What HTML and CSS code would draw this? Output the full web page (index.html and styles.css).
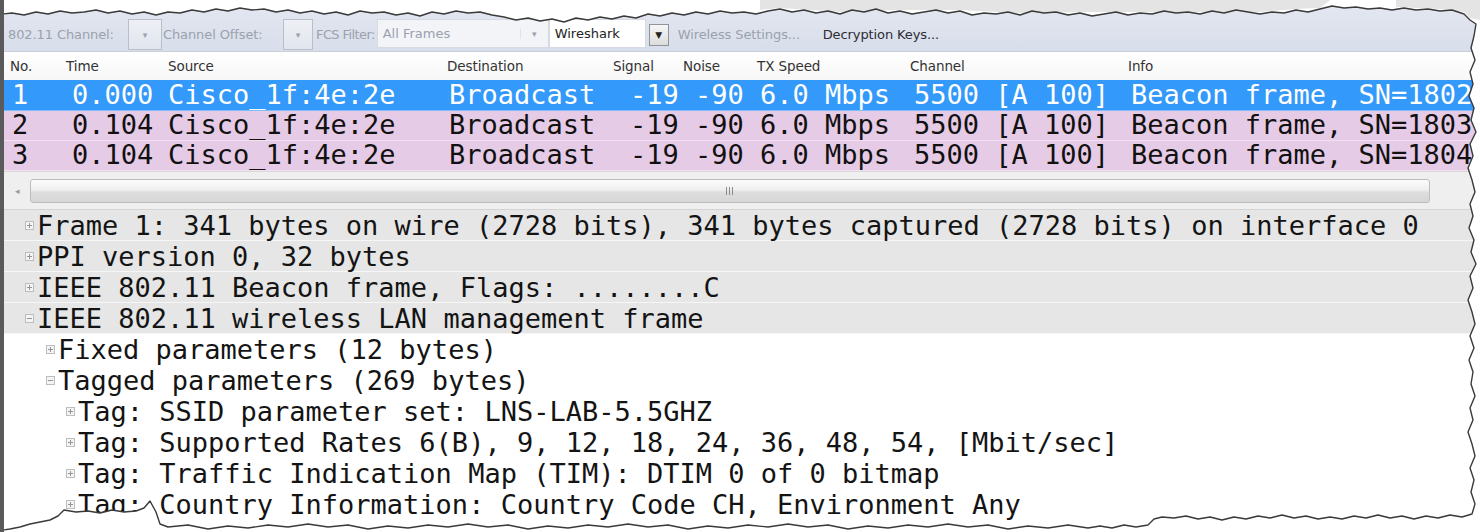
FILE: index.html
```html
<!DOCTYPE html>
<html lang="en">
<head>
<meta charset="utf-8">
<title>Wireshark - 802.11 capture</title>
<link rel="stylesheet" href="styles.css">
</head>
<body>
<div class="sheet">
  <div class="toolbar">
    <span class="tb-label dim w-chan">802.11 Channel:</span>
    <span class="combo mini"><span class="arr dim">&#9662;</span></span>
    <span class="tb-label dim w-off">Channel Offset:</span>
    <span class="combo mini2"><span class="arr dim">&#9662;</span></span>
    <span class="tb-label dim w-fcs">FCS Filter:</span>
    <span class="field fcs"><span class="field-text dim">All Frames</span><span class="arr dim">&#9662;</span></span>
    <span class="field iface"><span class="field-text">Wireshark</span></span>
    <span class="dropbtn">&#9660;</span>
    <span class="tb-label dim w-wifi">Wireless Settings...</span>
    <span class="tb-label strong">Decryption Keys...</span>
  </div>

  <div class="plist">
    <div class="pgrid phead">
      <span class="h-no">No.</span>
      <span>Time</span>
      <span>Source</span>
      <span>Destination</span>
      <span>Signal</span>
      <span>Noise</span>
      <span>TX Speed</span>
      <span>Channel</span>
      <span>Info</span>
    </div>
    <div class="pgrid prow sel">
      <span class="d-no">1</span>
      <span class="d-time">0.000</span>
      <span class="d-src">Cisco_1f:4e:2e</span>
      <span class="d-dst">Broadcast</span>
      <span class="d-sig">-19</span>
      <span class="d-noise">-90</span>
      <span class="d-tx">6.0 Mbps</span>
      <span class="d-chan">5500 [A 100]</span>
      <span class="d-info">Beacon frame, SN=1802</span>
    </div>
    <div class="pgrid prow">
      <span class="d-no">2</span>
      <span class="d-time">0.104</span>
      <span class="d-src">Cisco_1f:4e:2e</span>
      <span class="d-dst">Broadcast</span>
      <span class="d-sig">-19</span>
      <span class="d-noise">-90</span>
      <span class="d-tx">6.0 Mbps</span>
      <span class="d-chan">5500 [A 100]</span>
      <span class="d-info">Beacon frame, SN=1803</span>
    </div>
    <div class="pgrid prow">
      <span class="d-no">3</span>
      <span class="d-time">0.104</span>
      <span class="d-src">Cisco_1f:4e:2e</span>
      <span class="d-dst">Broadcast</span>
      <span class="d-sig">-19</span>
      <span class="d-noise">-90</span>
      <span class="d-tx">6.0 Mbps</span>
      <span class="d-chan">5500 [A 100]</span>
      <span class="d-info">Beacon frame, SN=1804</span>
    </div>
  </div>

  <div class="hscroll">
    <span class="sc-left">&#9666;</span>
    <span class="sc-thumb"><span class="grip"></span></span>
    <span class="sc-rest"></span>
  </div>

  <div class="tree">
    <div class="node shaded lv0"><span class="exp plus"></span>Frame 1: 341 bytes on wire (2728 bits), 341 bytes captured (2728 bits) on interface 0</div>
    <div class="node shaded lv0"><span class="exp plus"></span>PPI version 0, 32 bytes</div>
    <div class="node shaded lv0"><span class="exp plus"></span>IEEE 802.11 Beacon frame, Flags: ........C</div>
    <div class="node shaded lv0"><span class="exp minus"></span>IEEE 802.11 wireless LAN management frame</div>
    <div class="node lv1"><span class="exp plus"></span>Fixed parameters (12 bytes)</div>
    <div class="node lv1"><span class="exp minus"></span>Tagged parameters (269 bytes)</div>
    <div class="node lv2"><span class="exp plus"></span>Tag: SSID parameter set: LNS-LAB-5.5GHZ</div>
    <div class="node lv2"><span class="exp plus"></span>Tag: Supported Rates 6(B), 9, 12, 18, 24, 36, 48, 54, [Mbit/sec]</div>
    <div class="node lv2"><span class="exp plus"></span>Tag: Traffic Indication Map (TIM): DTIM 0 of 0 bitmap</div>
    <div class="node lv2"><span class="exp plus"></span>Tag: Country Information: Country Code CH, Environment Any</div>
  </div>

  <!-- torn paper outline laid over the window -->
  <svg class="edges" width="1480" height="532" viewBox="0 0 1480 532" aria-hidden="true">
    <defs>
      <path id="torn" d="M3,14 L12,13 24,15 36,12 48,14 60,11 72,13 84,12 96,10 108,13 120,11 132,14 144,12 156,15 168,12 180,13 192,10 204,12 216,9 228,11 240,8 252,10 264,9 276,12 288,10 300,13 312,11 324,14 336,12 348,15 360,11 372,13 384,12 396,15 408,13 420,16 432,12 444,14 456,11 468,13 480,12 492,15 504,17 516,20 528,18 540,21 552,19 564,22 576,18 588,20 600,17 612,19 624,16 636,18 648,14 660,16 672,13 684,15 696,12 708,14 720,11 732,13 744,12 756,14 768,11 780,9 792,12 804,10 816,13 828,11 840,14 852,10 864,12 876,9 888,13 900,11 912,14 924,12 936,10 948,13 960,11 972,15 984,13 996,14 1008,12 1020,15 1032,11 1044,13 1056,12 1068,15 1080,13 1092,16 1104,14 1116,12 1128,15 1140,13 1152,14 1164,11 1176,13 1188,12 1200,14 1212,11 1224,13 1236,10 1248,12 1260,14 1272,12 1284,13 1296,10 1308,12 1320,9 1332,6 1344,8 1356,7 1368,9 1380,8 1392,10 1404,8 1416,10 1428,9 1440,11 1452,10 1464,14 1470,20 1476,24
        L1474,36 1471,48 1475,60 1470,72 1473,84 1469,96 1474,108 1471,120 1476,132 1470,144 1473,156 1468,168 1472,180 1475,192 1470,204 1473,216 1469,228 1474,240 1471,252 1476,264 1470,276 1473,288 1468,300 1472,312 1475,324 1470,336 1474,348 1469,360 1473,372 1471,384 1475,396 1470,408 1473,420 1468,432 1472,444 1475,456 1470,468 1474,480 1471,492 1475,504 1472,514
        L1462,517 1450,515 1438,518 1426,516 1414,519 1402,516 1390,518 1378,515 1366,518 1354,516 1342,519 1330,517 1318,519 1306,516 1294,518 1282,515 1270,518 1258,516 1246,519 1234,517 1222,520 1210,517 1198,519 1186,516 1174,518 1162,517 1154,519 1148,525 1136,527 1124,525 1112,528 1100,526 1088,528 1068,525 1048,528 1028,526 1008,529 988,525 968,527 948,524 928,527 908,525 888,528 868,526 848,529 828,525 808,527 788,524 768,527 748,525 728,528 708,526 688,529 668,525 648,527 628,524 608,527 588,525 568,528 548,526 528,529 508,525 488,527 468,524 448,527 428,525 408,528 388,526 368,529 348,525 328,527 308,524 288,527 268,525 248,528 228,526 208,529 188,525 168,527 160,524 156,512 150,501 144,508 136,511 124,512 112,510 100,513 88,511 76,512 64,510 58,516 50,520 40,522 30,524 20,527 10,529 3,530 Z"/>
      <mask id="paper">
        <rect width="1480" height="532" fill="#fff"/>
        <use href="#torn" fill="#000"/>
      </mask>
    </defs>
    <rect class="outside" width="1480" height="532" mask="url(#paper)"/>
    <path class="shade" d="M760,0 H1330 L1320,8 1296,9 1260,12 1200,12 1140,12 1080,12 1020,13 960,10 900,10 840,12 780,8 760,10 Z M1396,0 H1480 V20 L1470,18 1464,12 1440,9 1416,8 1396,7 Z"/>
    <use href="#torn" class="outline"/>
  </svg>
</div>
</body>
</html>
```

FILE: styles.css
```css
* {
  box-sizing: border-box;
}

html, body {
  margin: 0;
  padding: 0;
  background: #ffffff;
}

.sheet {
  position: relative;
  width: 1480px;
  height: 532px;
  overflow: hidden;
  border-left: 4px solid #5a5a5a;
  background: #ffffff;
}

/* ---------- wireless toolbar ---------- */
.toolbar {
  height: 52px;
  padding: 18px 0 0 4px;
  display: flex;
  align-items: stretch;
  background: linear-gradient(#e4e8f2, #d8deea);
  border-bottom: 1px solid #c9cfdb;
  font-family: "DejaVu Sans", "Liberation Sans", sans-serif;
  font-size: 13px;
  color: #2b2b2b;
}

.tb-label {
  display: flex;
  align-items: center;
  white-space: nowrap;
  letter-spacing: -0.1px;
}

.dim {
  color: #9aa1ad;
}

.strong {
  color: #2c2c34;
}

.w-chan { width: 120px; }
.w-off  { width: 120px; margin-left: 1px; }
.w-fcs  { margin: 0 2px 0 3px; letter-spacing: -0.6px; }
.w-wifi { width: 145px; margin-left: 9px; }

.combo {
  display: flex;
  align-items: center;
  justify-content: center;
  margin: 1px 0 1px 0;
  border: 1px solid #b9bec8;
  background: linear-gradient(#eef0f5, #e1e5ee);
}

.mini  { width: 34px; }
.mini2 { width: 30px; }

.arr {
  font-size: 9px;
}

.field {
  display: flex;
  align-items: center;
  margin: 1px 0 3px 0;
  background: #ffffff;
  border: 1px solid #d6dae2;
}

.field-text {
  padding-left: 5px;
  flex: 1;
}

.fcs {
  width: 172px;
  background: #f3f4f7;
}

.fcs .arr {
  width: 28px;
  text-align: center;
  border-left: 1px solid #e0e3ea;
}

.iface {
  width: 97px;
  color: #222;
}

.dropbtn {
  display: flex;
  align-items: center;
  justify-content: center;
  width: 20px;
  margin: 6px 0 5px 3px;
  border: 1px solid #8f949c;
  background: linear-gradient(#f7f7f7, #dcdcdc);
  font-size: 9px;
  color: #222;
}

/* ---------- packet list ---------- */
.plist {
  font-family: "DejaVu Sans Mono", "Liberation Mono", monospace;
}

.pgrid {
  display: grid;
  grid-template-columns: 58px 102px 279px 166px 70px 74px 153px 218px minmax(0, 1fr);
  white-space: nowrap;
}

.phead {
  height: 28px;
  padding-top: 6px;
  background: linear-gradient(#ffffff, #f7f7f7);
  font-family: "DejaVu Sans", "Liberation Sans", sans-serif;
  font-size: 13.5px;
  color: #333;
  letter-spacing: -0.1px;
}

.phead span {
  padding-left: 4px;
}

.phead .h-no {
  padding-left: 6px;
}

.prow {
  height: 30px;
  line-height: 28px;
  font-size: 27px;
  color: #111111;
  background: #e6cbe6;
  border-bottom: 1px solid #f1e1f1;
}

.prow.sel {
  height: 31px;
  line-height: 30px;
  background: #3399fa;
  color: #ffffff;
  border-bottom: 1px solid #7fbdf8;
}

.d-no    { padding-left: 8px; }
.d-time  { padding-left: 10px; }
.d-src   { padding-left: 4px; }
.d-dst   { padding-left: 6px; }
.d-sig   { padding-left: 21px; }
.d-noise { padding-left: 16px; }
.d-tx    { padding-left: 7px; }
.d-chan  { padding-left: 8px; }
.d-info  { padding-left: 7px; }

/* ---------- horizontal scrollbar ---------- */
.hscroll {
  height: 39px;
  display: flex;
  align-items: center;
  background: #efefef;
  border-top: 1px solid #d9d9d9;
  border-bottom: 1px solid #d4d4d4;
}

.sc-left {
  width: 26px;
  text-align: center;
  font-size: 9px;
  color: #9a9a9a;
}

.sc-thumb {
  width: 1400px;
  height: 24px;
  display: flex;
  align-items: center;
  justify-content: center;
  border: 1px solid #bdbdbd;
  border-radius: 3px;
  background: linear-gradient(#fbfbfb 0%, #efefef 45%, #dedede 55%, #d6d6d6 100%);
}

.grip {
  width: 9px;
  height: 8px;
  background: repeating-linear-gradient(90deg, #8c8c8c 0 1px, transparent 1px 3px);
}

.sc-rest {
  flex: 1;
}

/* ---------- packet details tree ---------- */
.tree {
  font-family: "DejaVu Sans Mono", "Liberation Mono", monospace;
  font-size: 27px;
  color: #141414;
}

.node {
  height: 31px;
  line-height: 31px;
  white-space: nowrap;
  display: flex;
  align-items: center;
}

.shaded {
  background: #e6e6e6;
  border-bottom: 1px solid #f6f6f6;
}

.lv0 { padding-left: 21px; }
.lv1 { padding-left: 42px; }
.lv2 { padding-left: 62px; }

.exp {
  position: relative;
  flex: none;
  width: 9px;
  height: 9px;
  margin-right: 3px;
  border: 1px solid #bdbdbd;
  background: #f4f4f4;
}

.exp::before,
.exp::after {
  content: "";
  position: absolute;
  background: #959595;
}

.exp::before {
  left: 1px;
  right: 1px;
  top: 3px;
  height: 1px;
}

.plus::after {
  top: 1px;
  bottom: 1px;
  left: 3px;
  width: 1px;
}

/* ---------- torn edges ---------- */
.edges {
  position: absolute;
  top: 0;
  left: -4px;
  pointer-events: none;
}

.outside {
  fill: #ffffff;
}

.shade {
  fill: #e4e4e4;
}

.outline {
  fill: none;
  stroke: #3a3a3a;
  stroke-width: 1.4;
  stroke-linejoin: round;
}
```
